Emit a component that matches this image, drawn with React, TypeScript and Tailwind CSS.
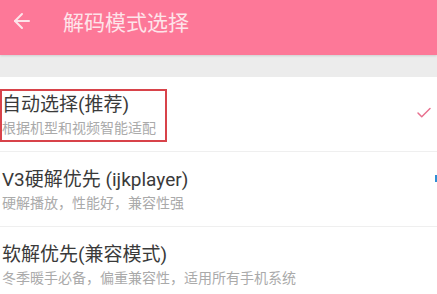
import React from 'react';
import { ArrowLeft, Check } from 'lucide-react';

const options = [
  { title: '自动选择(推荐)', desc: '根据机型和视频智能适配', checked: true },
  { title: 'V3硬解优先 (ijkplayer)', desc: '硬解播放，性能好，兼容性强', checked: false },
  { title: '软解优先(兼容模式)', desc: '冬季暖手必备，偏重兼容性，适用所有手机系统', checked: false },
];

export default function App() {
  return (
    <div className="relative w-[437px] h-[294px] overflow-hidden bg-white font-['Roboto','Noto_Sans_CJK_SC',sans-serif]">
      {/* Header */}
      <div className="h-[55px] bg-[#fd7898] flex items-start pt-[8px] shadow-[0_1px_2px_rgba(0,0,0,0.12)] relative z-10">
        <div className="w-[44px] flex justify-center pt-[1px]">
          <ArrowLeft className="w-[24px] h-[24px] text-[#fde4ea]" strokeWidth={2} />
        </div>
        <span className="ml-[19px] text-[21px] leading-[26px] text-[#fde4ea] font-['Noto_Sans_CJK_SC',sans-serif]">
          解码模式选择
        </span>
      </div>

      {/* Gray gap */}
      <div className="h-[22px] bg-[#ececec]" />

      {/* Options */}
      <div className="flex flex-col">
        {options.map((o) => (
          <div
            key={o.title}
            className="h-[75px] border-b border-[#efefef] flex items-start justify-between pl-[2px] pr-[4px] pt-[17px]"
          >
            <div className="flex flex-col gap-[2px]">
              <span className="text-[19px] leading-[22px] text-[#3a3a3a]">{o.title}</span>
              <span className="text-[14px] leading-[18px] text-[#aaaaaa] font-['Noto_Sans_CJK_SC',sans-serif]">
                {o.desc}
              </span>
            </div>
            {o.checked && (
              <Check className="w-[18px] h-[18px] text-[#e8708f] mt-[10px]" strokeWidth={2} />
            )}
          </div>
        ))}
      </div>

      {/* Red annotation box */}
      <div className="absolute left-0 top-[89px] w-[167px] h-[53px] border-2 border-[#d8434a]" />

      {/* Blue sliver at right edge */}
      <div className="absolute right-0 top-[175px] w-[2px] h-[7px] bg-[#2f8fd6]" />
    </div>
  );
}
